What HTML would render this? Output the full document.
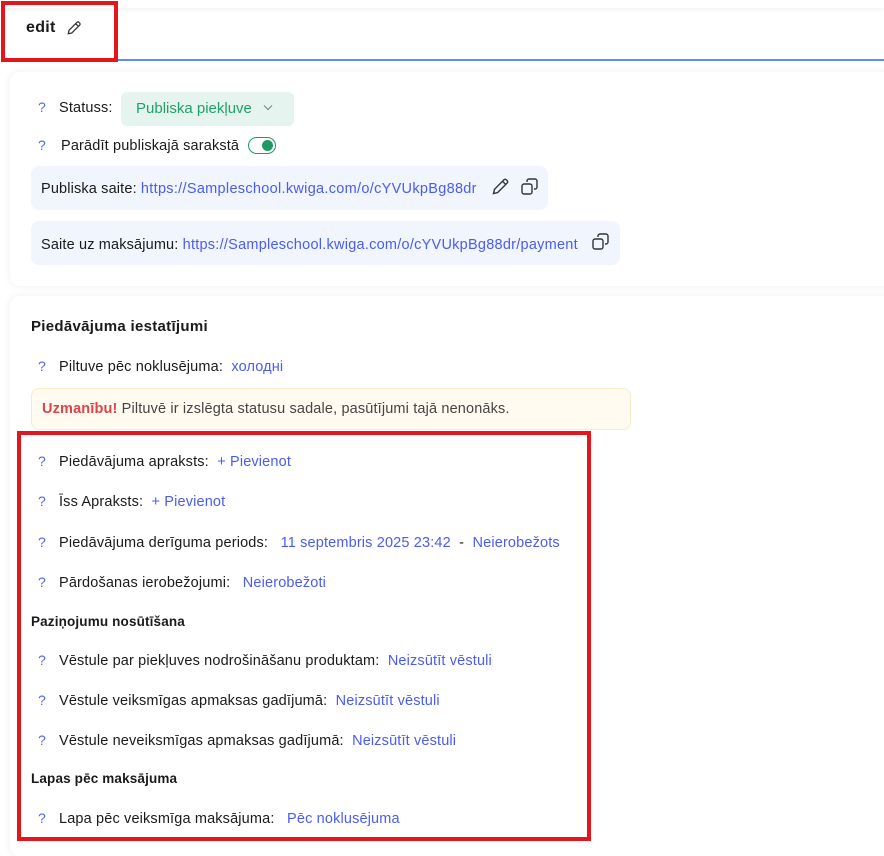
<!DOCTYPE html>
<html><head><meta charset="utf-8">
<style>
*{box-sizing:border-box;margin:0;padding:0}
body{width:884px;height:841px;background:#fff;font-family:"Liberation Sans",sans-serif;font-size:14.5px;letter-spacing:0.15px;color:#1a1a1a;position:relative;overflow:hidden}
.a{position:absolute;white-space:nowrap}
.q{position:absolute;color:#5566f0;font-size:14px}
.l{color:#4a5cf2}
.card{position:absolute;background:#fff;border-radius:10px;box-shadow:0 0 8px rgba(0,0,0,0.07)}
.box{position:absolute;background:#f1f5fe;border-radius:8px}
</style></head><body>
<div class="a" style="left:0;top:0;width:884px;height:8px;box-shadow:0 2px 6px rgba(0,0,0,0.05)"></div>
<div class="a" style="left:116px;top:59px;width:768px;height:2px;background:#6189f7"></div>
<div class="a" style="left:1px;top:1px;width:117px;height:61px;border:4px solid #e3161d"></div>
<div class="a" style="left:26px;top:18px;font-weight:bold;font-size:16px;line-height:20px;letter-spacing:0.3px">edit</div>
<svg class="a" style="left:66px;top:20px" width="16" height="16" viewBox="0 0 14 14" fill="none" stroke="#333" stroke-width="1.1"><path d="M2 12l0.6-3L9.5 2.1a1.3 1.3 0 0 1 1.9 0l0.5 0.5a1.3 1.3 0 0 1 0 1.9L5 11.4z M8.5 3.2l2.3 2.3"/></svg>

<div class="card" style="left:10px;top:72px;width:890px;height:214px"></div>
<div class="q" style="left:38px;top:99px">?</div>
<div class="a" style="left:59px;top:100px">Statuss:</div>
<div class="a" style="left:121px;top:92px;width:173px;height:34px;background:#e5f4ee;border-radius:6px"></div>
<div class="a" style="left:136px;top:100px;color:#21a06b;font-size:15px;letter-spacing:0">Publiska piekļuve</div>
<svg class="a" style="left:262px;top:104px" width="12" height="8" viewBox="0 0 12 8" fill="none" stroke="#888" stroke-width="1.2"><path d="M2 1.5l4 4 4-4"/></svg>
<div class="q" style="left:38px;top:137px">?</div>
<div class="a" style="left:61px;top:138px">Parādīt publiskajā sarakstā</div>
<div class="a" style="left:248px;top:137px;width:28px;height:17px;border:1.5px solid #1f9a64;border-radius:9px"></div>
<div class="a" style="left:262px;top:140px;width:11px;height:11px;background:#1f9a64;border-radius:50%"></div>

<div class="box" style="left:31px;top:166px;width:517px;height:44px"></div>
<div class="a" style="left:41px;top:181px">Publiska saite: <span class="l" style="letter-spacing:0.3px">https://Sampleschool.kwiga.com/o/cYVUkpBg88dr</span></div>
<svg class="a" style="left:491px;top:177px" width="19" height="19" viewBox="0 0 19 19" fill="none" stroke="#333" stroke-width="1.4"><path d="M2.5 16.5l1-4.2L13 2.8a1.6 1.6 0 0 1 2.3 0l0.9 0.9a1.6 1.6 0 0 1 0 2.3L6.7 15.5z M11.5 4.3l3.2 3.2"/></svg>
<svg class="a" style="left:520px;top:177px" width="20" height="20" viewBox="0 0 20 20" fill="none" stroke="#333" stroke-width="1.4"><rect x="2" y="7" width="10" height="10" rx="2"/><path d="M7 5V4a2 2 0 0 1 2-2h6a2 2 0 0 1 2 2v6a2 2 0 0 1-2 2h-1"/></svg>
<div class="box" style="left:31px;top:221px;width:589px;height:44px"></div>
<div class="a" style="left:41px;top:237px">Saite uz maksājumu: <span class="l" style="letter-spacing:0.25px">https://Sampleschool.kwiga.com/o/cYVUkpBg88dr/payment</span></div>
<svg class="a" style="left:591px;top:232px" width="20" height="20" viewBox="0 0 20 20" fill="none" stroke="#333" stroke-width="1.4"><rect x="2" y="7" width="10" height="10" rx="2"/><path d="M7 5V4a2 2 0 0 1 2-2h6a2 2 0 0 1 2 2v6a2 2 0 0 1-2 2h-1"/></svg>

<div class="card" style="left:10px;top:296px;width:890px;height:560px"></div>
<div class="a" style="left:31px;top:318px;font-weight:bold;font-size:15px;letter-spacing:0.3px">Piedāvājuma iestatījumi</div>
<div class="q" style="left:38px;top:358px">?</div>
<div class="a" style="left:59px;top:359px">Piltuve pēc noklusējuma:&nbsp; <span class="l">холодні</span></div>
<div class="a" style="left:31px;top:388px;width:600px;height:42px;background:#fffbf0;border:1px solid #f7ecc8;border-radius:8px"></div>
<div class="a" style="left:42px;top:401px"><b style="color:#e0424a">Uzmanību!</b> <span style="color:#444">Piltuvē ir izslēgta statusu sadale, pasūtījumi tajā nenonāks.</span></div>

<div class="q" style="left:38px;top:453px">?</div>
<div class="a" style="left:59px;top:454px">Piedāvājuma apraksts:&nbsp; <span class="l">+ Pievienot</span></div>
<div class="q" style="left:38px;top:493px">?</div>
<div class="a" style="left:59px;top:494px">Īss Apraksts:&nbsp; <span class="l">+ Pievienot</span></div>
<div class="q" style="left:38px;top:534px">?</div>
<div class="a" style="left:59px;top:535px">Piedāvājuma derīguma periods:&nbsp;&nbsp; <span class="l">11 septembris 2025 23:42</span>&nbsp; - &nbsp;<span class="l">Neierobežots</span></div>
<div class="q" style="left:38px;top:574px">?</div>
<div class="a" style="left:59px;top:575px">Pārdošanas ierobežojumi:&nbsp;&nbsp; <span class="l">Neierobežoti</span></div>
<div class="a" style="left:31px;top:614px;font-weight:bold;font-size:13.5px">Paziņojumu nosūtīšana</div>
<div class="q" style="left:38px;top:652px">?</div>
<div class="a" style="left:59px;top:653px">Vēstule par piekļuves nodrošināšanu produktam:&nbsp; <span class="l">Neizsūtīt vēstuli</span></div>
<div class="q" style="left:38px;top:692px">?</div>
<div class="a" style="left:59px;top:693px">Vēstule veiksmīgas apmaksas gadījumā:&nbsp; <span class="l">Neizsūtīt vēstuli</span></div>
<div class="q" style="left:38px;top:732px">?</div>
<div class="a" style="left:59px;top:733px">Vēstule neveiksmīgas apmaksas gadījumā:&nbsp; <span class="l">Neizsūtīt vēstuli</span></div>
<div class="a" style="left:31px;top:771px;font-weight:bold;font-size:13.5px">Lapas pēc maksājuma</div>
<div class="q" style="left:38px;top:810px">?</div>
<div class="a" style="left:59px;top:811px">Lapa pēc veiksmīga maksājuma:&nbsp;&nbsp; <span class="l">Pēc noklusējuma</span></div>

<div class="a" style="left:17px;top:431px;width:574px;height:410px;border:4px solid #e3161d"></div>
</body></html>
